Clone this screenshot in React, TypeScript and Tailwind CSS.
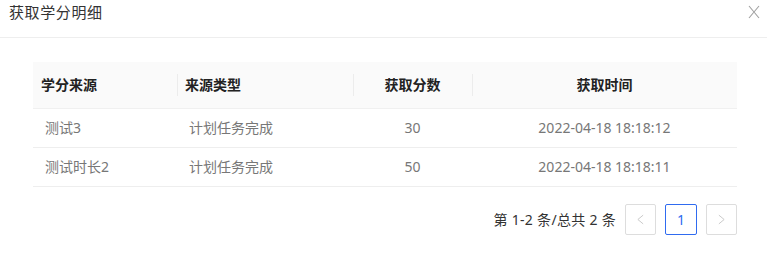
import React from 'react'

const font = { fontFamily: '"Noto Sans", "Noto Sans CJK SC", sans-serif' }

const rows = [
    { source: '测试3', type: '计划任务完成', score: '30', time: '2022-04-18 18:18:12' },
    { source: '测试时长2', type: '计划任务完成', score: '50', time: '2022-04-18 18:18:11' },
]

export default function App() {
    return (
        <div className="w-[767px] h-[272px] bg-white" style={font}>
            {/* ::Header */}
            <div className="h-[38px] flex items-start justify-between pl-[9px] pr-[6px] border-b border-[#eeeeee]">
                <h2 className="text-[15px] leading-[24px] text-[#333333] tracking-[0.6px]">获取学分明细</h2>
                <button className="mt-[5px] w-[13px] h-[14px] text-[#a0a0a0]">
                    <svg viewBox="0 0 12 14" className="w-[12px] h-[14px]" fill="none" stroke="currentColor" strokeWidth="1.1">
                        <path d="M1 1 L11 13 M11 1 L1 13" />
                    </svg>
                </button>
            </div>

            {/* ::Table */}
            <div className="pt-6 pl-[33px]">
                <table className="w-[704px] border-collapse text-[14px] table-fixed">
                    <colgroup>
                        <col className="w-[144px]" />
                        <col className="w-[176px]" />
                        <col className="w-[119px]" />
                        <col className="w-[265px]" />
                    </colgroup>
                    <thead>
                        <tr className="bg-[#fafafa] h-[46px] text-[#222222] border-b border-[#f0f0f0]">
                            <th className="text-left pl-2 font-bold">学分来源</th>
                            <th className="text-left pl-2 font-bold relative">
                                <span className="absolute left-0 top-[12px] h-[22px] w-px bg-[#ececec]" />
                                来源类型
                            </th>
                            <th className="text-center font-bold relative">
                                <span className="absolute left-0 top-[12px] h-[22px] w-px bg-[#ececec]" />
                                获取分数
                            </th>
                            <th className="text-center font-bold relative">
                                <span className="absolute left-0 top-[12px] h-[22px] w-px bg-[#ececec]" />
                                获取时间
                            </th>
                        </tr>
                    </thead>
                    <tbody>
                        {rows.map((r) => (
                            <tr key={r.source} className="h-[39px] text-[#777777] border-b border-[#eeeeee]">
                                <td className="pl-3">{r.source}</td>
                                <td className="pl-3">{r.type}</td>
                                <td className="text-center">{r.score}</td>
                                <td className="text-center">{r.time}</td>
                            </tr>
                        ))}
                    </tbody>
                </table>

                {/* ::Pagination */}
                <div className="w-[704px] flex justify-end items-center mt-[17px] gap-[9px] text-[14px]">
                    <span className="text-[#333333] tracking-[0.3px]">第 1-2 条/总共 2 条</span>
                    <button className="w-[31px] h-[31px] border border-[#dddddd] rounded-[2px] flex items-center justify-center text-[#c8c8c8]">
                        <svg viewBox="0 0 8 12" className="w-[7px] h-[11px]" fill="none" stroke="currentColor" strokeWidth="1.1">
                            <path d="M7 1 L1 6 L7 11" />
                        </svg>
                    </button>
                    <button className="w-[32px] h-[31px] border border-[#2f6bf0] rounded-[2px] text-[#2f6bf0] text-[14px]">1</button>
                    <button className="w-[31px] h-[31px] border border-[#dddddd] rounded-[2px] flex items-center justify-center text-[#c8c8c8]">
                        <svg viewBox="0 0 8 12" className="w-[7px] h-[11px]" fill="none" stroke="currentColor" strokeWidth="1.1">
                            <path d="M1 1 L7 6 L1 11" />
                        </svg>
                    </button>
                </div>
            </div>
        </div>
    )
}
